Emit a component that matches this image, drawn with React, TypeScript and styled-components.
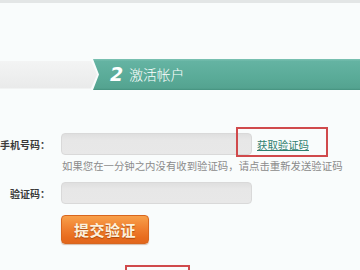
import React from "react";
import styled, { createGlobalStyle } from "styled-components";

const Global = createGlobalStyle`
  html, body { margin: 0; padding: 0; }
  body {
    background: #f9fcfc;
    font-family: "Noto Sans CJK SC", "Noto Sans", sans-serif;
    width: 360px;
    height: 270px;
    overflow: hidden;
  }
`;

const Page = styled.div`
  position: relative;
  width: 360px;
  height: 270px;
  overflow: hidden;
  display: flex;
  flex-direction: column;
`;

const TopRule = styled.div`
  height: 3px;
  background: #e3e6e6;
`;

const StepBar = styled.div`
  margin-top: 56px;
  height: 31px;
  display: flex;
  align-items: center;
`;

const DoneStep = styled.div`
  width: 97px;
  height: 28px;
  flex: none;
  background: linear-gradient(#f3f4f4, #e9eaea);
  clip-path: polygon(0 0, 91px 0, 97px 50%, 91px 100%, 0 100%);
`;

const ActiveStep = styled.div`
  flex: 1;
  height: 31px;
  margin-left: -4px;
  box-sizing: border-box;
  padding-left: 17px;
  display: flex;
  align-items: center;
  background: linear-gradient(#7cc2b3 0, #64b3a2 8%, #5aab98 60%, #54a390 94%, #45917e 100%);
  clip-path: polygon(0 0, 100% 0, 100% 100%, 0 100%, 6px 50%);
  color: #fff;
`;

const StepNum = styled.span`
  font-family: "DejaVu Sans", "Liberation Sans", sans-serif;
  font-style: italic;
  font-weight: bold;
  font-size: 19px;
  line-height: 1;
`;

const StepTitle = styled.span`
  margin-left: 6px;
  font-size: 13.8px;
  font-weight: 300;
  line-height: 1;
`;

const Form = styled.div`
  padding-top: 43px;
  display: flex;
  flex-direction: column;
`;

const Row = styled.div`
  display: flex;
  align-items: center;
  height: 22px;
`;

const Label = styled.div`
  width: 50px;
  margin-right: 11px;
  text-align: right;
  font-size: 10px;
  font-weight: bold;
  color: #3a3a3a;
  white-space: nowrap;
`;

const Input = styled.div`
  width: 191px;
  height: 22px;
  box-sizing: border-box;
  border: 1px solid #d9d9d9;
  border-radius: 4px;
  background: linear-gradient(#dfdfdf, #e7e7e7 30%, #e8e8e8);
`;

const CodeLink = styled.a`
  margin-left: 5px;
  font-size: 10.4px;
  color: #2f7e6e;
  text-decoration: underline;
  white-space: nowrap;
`;

const Hint = styled.div`
  margin: 3px 0 0 62px;
  height: 16px;
  line-height: 16px;
  font-size: 10.4px;
  color: #8b8b8b;
  white-space: nowrap;
`;

const SecondRow = styled(Row)`
  margin-top: 8px;
`;

const Submit = styled.button`
  margin: 11px 0 0 61px;
  width: 88px;
  height: 29px;
  padding: 0;
  border: 1px solid #d8661e;
  border-radius: 4px;
  background: linear-gradient(#f8a04a, #f08030 45%, #e86c1e 80%, #e2661c);
  box-shadow: 0 1px 1px rgba(150, 70, 20, 0.35);
  color: #fdf1dd;
  font-family: "Noto Sans CJK SC", sans-serif;
  font-weight: bold;
  font-size: 15px;
  letter-spacing: 0.5px;
  text-shadow: 0 1px 1px rgba(130, 50, 0, 0.6);
`;

const Annotation = styled.div<{ $l: number; $t: number; $w: number; $h: number }>`
  position: absolute;
  left: ${(p) => p.$l}px;
  top: ${(p) => p.$t}px;
  width: ${(p) => p.$w}px;
  height: ${(p) => p.$h}px;
  box-sizing: border-box;
  border: 2px solid #d04a4c;
  pointer-events: none;
`;

export default function App() {
  return (
    <>
      <Global />
      <Page>
        <TopRule />
        <StepBar>
          <DoneStep />
          <ActiveStep>
            <StepNum>2</StepNum>
            <StepTitle>激活帐户</StepTitle>
          </ActiveStep>
        </StepBar>
        <Form>
          <Row>
            <Label>手机号码：</Label>
            <Input />
            <CodeLink>获取验证码</CodeLink>
          </Row>
          <Hint>如果您在一分钟之内没有收到验证码，请点击重新发送验证码</Hint>
          <SecondRow>
            <Label>验证码：</Label>
            <Input />
          </SecondRow>
          <div>
            <Submit>提交验证</Submit>
          </div>
        </Form>
        <Annotation $l={236} $t={127} $w={92} $h={30} />
        <Annotation $l={125} $t={265} $w={65} $h={20} />
      </Page>
    </>
  );
}
